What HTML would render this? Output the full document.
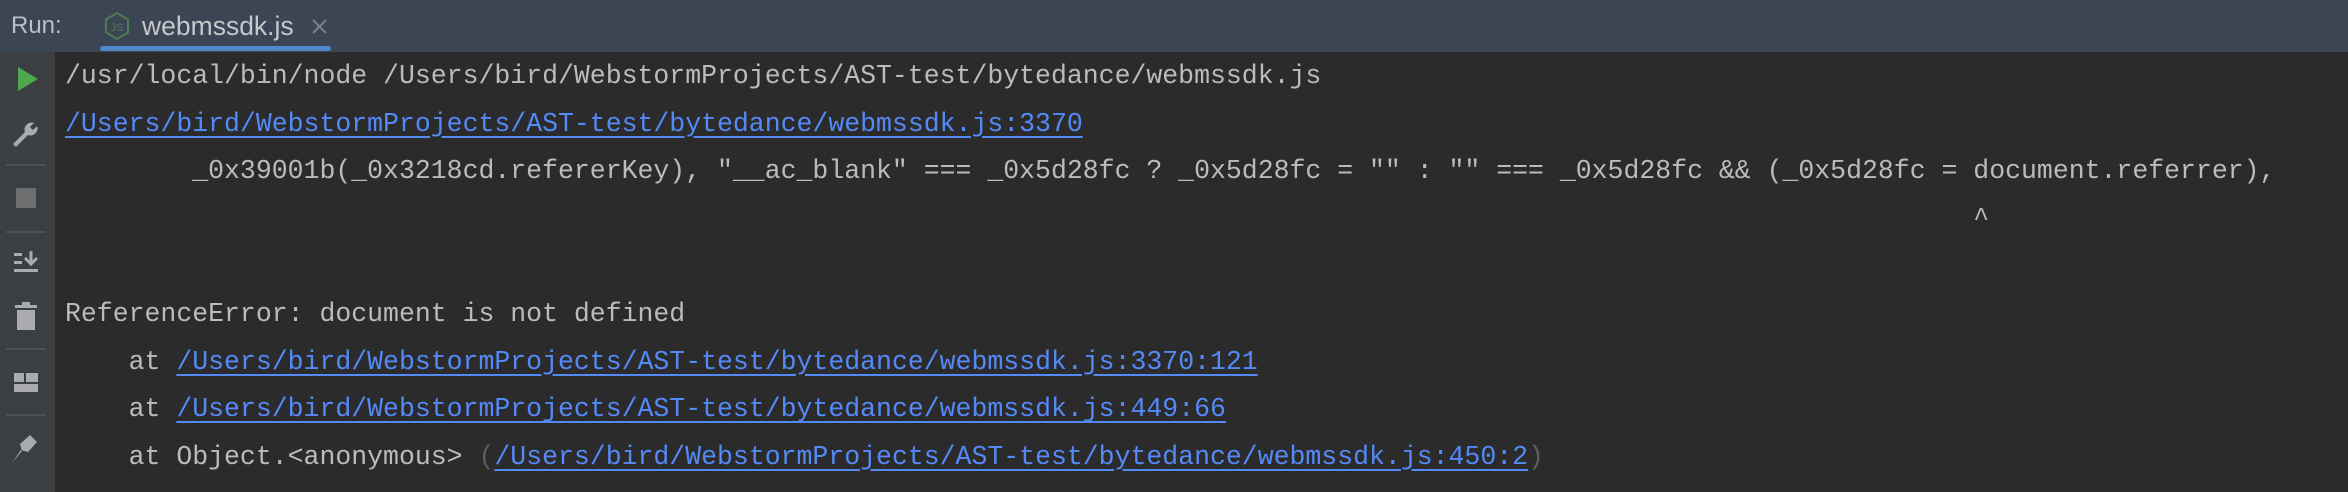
<!DOCTYPE html>
<html><head><meta charset="utf-8"><style>
html,body{margin:0;padding:0;width:2348px;height:492px;overflow:hidden;background:#2b2b2b;}
.hdr{position:absolute;left:0;top:0;width:2348px;height:52px;background:#3c4553;}
.run{position:absolute;left:11px;top:12px;font:24px "Liberation Sans",sans-serif;color:#bcbfc4;}
.tabt{position:absolute;left:142px;top:11px;font:26.5px "Liberation Sans",sans-serif;color:#c5c8cc;}
.ul{position:absolute;left:100px;top:46px;width:231px;height:5px;border-radius:3px;background:#4a88c7;}
.side{position:absolute;left:0;top:52px;width:55px;height:440px;background:#3c3f41;}
.sep{position:absolute;left:6px;width:40px;height:2px;background:#4e5254;}
.con{position:absolute;left:65px;top:53px;font:26.5px/47.6px "Liberation Mono",monospace;color:#bbbbbb;white-space:pre;}
.l{color:#548af7;text-decoration:underline;text-underline-offset:5px;}
.d{color:#5d5d5d;}
</style></head><body>
<div class="hdr"></div>
<div class="run">Run:</div>
<svg style="position:absolute;left:104px;top:12px" width="26" height="28" viewBox="0 0 26 28"><polygon points="13,1 24,7.5 24,20.5 13,27 2,20.5 2,7.5" fill="none" stroke="#4e7a55" stroke-width="2"/><text x="13" y="19" font-family="Liberation Sans" font-size="11" fill="#4e7a55" text-anchor="middle">JS</text></svg>
<div class="tabt">webmssdk.js</div>
<svg style="position:absolute;left:312px;top:19px" width="15" height="15"><path d="M1 1L14 14M14 1L1 14" stroke="#7c8188" stroke-width="2"/></svg>
<div class="ul"></div>
<div class="side"></div>
<svg style="position:absolute;left:0;top:51px" width="55" height="441">
<polygon points="18,16 38,28 18,40" fill="#4ea850"/>
<path d="M37,75 a7,7 0 0 1 -9,9 L16,96 L13,93 L25,81 a7,7 0 0 1 9,-9 L30,76 L33,79 Z" fill="#a9abae"/>
<rect x="16" y="137" width="20" height="20" fill="#6d6f71"/>
<rect x="14" y="202" width="8" height="3" fill="#a9abae"/><rect x="14" y="210" width="8" height="3" fill="#a9abae"/><rect x="14" y="218" width="24" height="3" fill="#a9abae"/>
<path d="M31,200 V213 M25,207 L31,213 L37,207" stroke="#a9abae" stroke-width="3" fill="none"/>
<rect x="15" y="254" width="22" height="3" fill="#a9abae"/><rect x="22" y="251" width="8" height="3" fill="#a9abae"/><rect x="17" y="259" width="18" height="20" fill="#a9abae"/>
<rect x="14" y="322" width="10" height="9" fill="#a9abae"/><rect x="26" y="322" width="12" height="9" fill="#a9abae"/><rect x="14" y="333" width="24" height="8" fill="#a9abae"/>
<path d="M12,412 L22,400 L20,393 L30,384 L37,391 L28,401 L21,399 Z" fill="#a9abae"/>
</svg>
<div class="sep" style="top:164px"></div>
<div class="sep" style="top:231px"></div>
<div class="sep" style="top:348px"></div>
<div class="sep" style="top:414px"></div>
<div class="con">/usr/local/bin/node /Users/bird/WebstormProjects/AST-test/bytedance/webmssdk.js
<span class="l">/Users/bird/WebstormProjects/AST-test/bytedance/webmssdk.js:3370</span>
        _0x39001b(_0x3218cd.refererKey), "__ac_blank" === _0x5d28fc ? _0x5d28fc = "" : "" === _0x5d28fc &amp;&amp; (_0x5d28fc = document.referrer),
                                                                                                                        ^

ReferenceError: document is not defined
    at <span class="l">/Users/bird/WebstormProjects/AST-test/bytedance/webmssdk.js:3370:121</span>
    at <span class="l">/Users/bird/WebstormProjects/AST-test/bytedance/webmssdk.js:449:66</span>
    at Object.&lt;anonymous&gt; <span class="d">(</span><span class="l">/Users/bird/WebstormProjects/AST-test/bytedance/webmssdk.js:450:2</span><span class="d">)</span></div>
</body></html>
